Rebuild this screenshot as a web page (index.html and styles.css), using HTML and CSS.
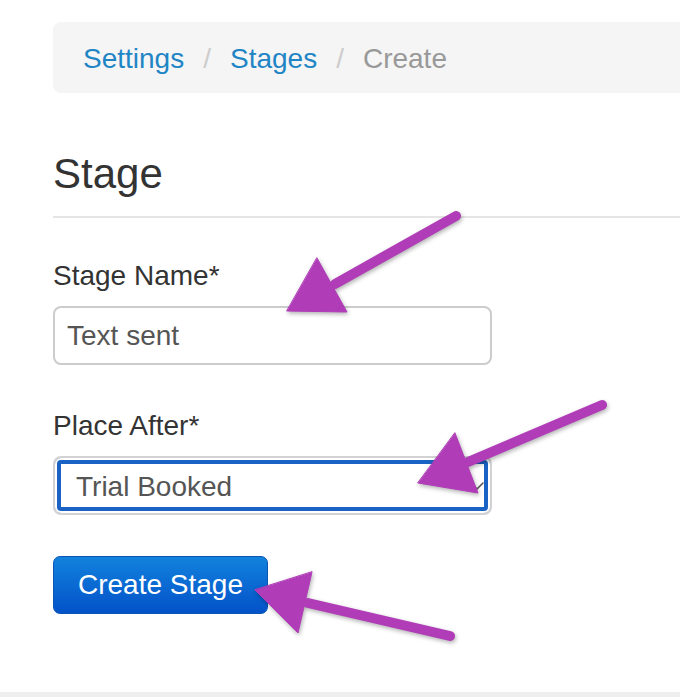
FILE: index.html
```html
<!DOCTYPE html>
<html lang="en">
<head>
    <meta charset="UTF-8">
    <meta name="viewport" content="width=device-width, initial-scale=1.0">
    <title>Create Stage</title>
    <link rel="stylesheet" href="styles.css">
</head>
<body>

<div class="page">
    <ol class="breadcrumb">
        <li><a href="#">Settings</a></li>
        <li><a href="#">Stages</a></li>
        <li class="active">Create</li>
    </ol>

    <form class="stage-form" onsubmit="return false">
        <h2 class="legend">Stage</h2>

        <div class="form-group">
            <label for="stageName">Stage Name*</label>
            <input type="text" id="stageName" class="form-control" value="Text sent">
        </div>

        <div class="form-group">
            <label for="placeAfter">Place After*</label>
            <div class="select-wrap">
                <select id="placeAfter" class="form-control focused">
                    <option>Trial Booked</option>
                </select>
                <svg class="chevron" width="16" height="10" viewBox="0 0 16 10">
                    <polyline points="2,2 8,8 14,2" fill="none" stroke="#555" stroke-width="1.6" stroke-linecap="round" stroke-linejoin="round"/>
                </svg>
            </div>
        </div>

        <button type="submit" class="btn-primary">Create Stage</button>
    </form>
</div>

<div class="footer-line"></div>

<!-- annotation arrows on top of the screenshot -->
<svg class="arrows" width="680" height="698" viewBox="0 0 680 698">
    <g fill="#b03cb8" stroke="#b03cb8" stroke-linecap="round">
        <line x1="456" y1="216" x2="335" y2="284" stroke-width="10"/>
        <polygon points="317,258 347,312 287,311" stroke-width="1" stroke-linejoin="round"/>

        <line x1="602" y1="405" x2="468" y2="462" stroke-width="10"/>
        <polygon points="455,433 478,493 418,483" stroke-width="1" stroke-linejoin="round"/>

        <line x1="450" y1="636" x2="308" y2="603" stroke-width="10"/>
        <polygon points="312,572 298,633 255,590" stroke-width="1" stroke-linejoin="round"/>
    </g>
</svg>

</body>
</html>
```

FILE: styles.css
```css
body {
    margin: 0;
    height: 698px;
    overflow: hidden;
    position: relative;
    background: #fff;
    color: #333;
    font-family: "Liberation Sans", Arial, Helvetica, sans-serif;
    font-size: 28px;
    line-height: 40px;
}

.page {
    padding: 22px 0 0 53px;
}

/* breadcrumb */
.breadcrumb {
    display: flex;
    list-style: none;
    margin: 0 -20px 0 0;
    padding: 17px 30px 14px;
    background: #f5f5f5;
    border-radius: 8px;
}

.breadcrumb li + li::before {
    content: "/";
    padding: 0 19px;
    color: #ccc;
}

.breadcrumb a {
    color: #1f85c5;
    text-decoration: none;
}

.breadcrumb .active {
    color: #999;
}

/* form */
.legend {
    margin: 51px 0 38px;
    padding-bottom: 12px;
    border-bottom: 2px solid #e5e5e5;
    font-size: 42px;
    line-height: 60px;
    font-weight: normal;
}

.form-group {
    margin-bottom: 41px;
}

.form-group label {
    display: block;
    margin-bottom: 10px;
    font-weight: normal;
}

.form-control {
    display: block;
    width: 439px;
    height: 59px;
    box-sizing: border-box;
    margin: 0;
    padding: 0 12px;
    border: 2px solid #ccc;
    border-radius: 8px;
    background: #fff;
    color: #555;
    font: inherit;
    outline: none;
}

.select-wrap {
    position: relative;
    width: 439px;
}

select.form-control {
    -webkit-appearance: none;
    appearance: none;
    padding: 3px 12px 0 21px;
    border-color: #d2d2d2;
}

select.focused {
    box-shadow: inset 0 0 0 2px #fff, inset 0 0 0 6px #1a62c4;
}

.chevron {
    position: absolute;
    left: 416px;
    top: 25px;
}

.btn-primary {
    display: block;
    width: 215px;
    height: 58px;
    margin-top: 1px;
    padding: 0;
    border: 1px solid #0b56b5;
    border-radius: 7px;
    background: linear-gradient(#1282dd, #0352c9);
    color: #fff;
    font: inherit;
    cursor: pointer;
}

.footer-line {
    margin-top: 78px;
    height: 5px;
    background: #efefef;
}

.arrows {
    position: absolute;
    top: 0;
    left: 0;
    pointer-events: none;
    filter: drop-shadow(1px 2px 2px rgba(0, 0, 0, 0.3));
}
```
